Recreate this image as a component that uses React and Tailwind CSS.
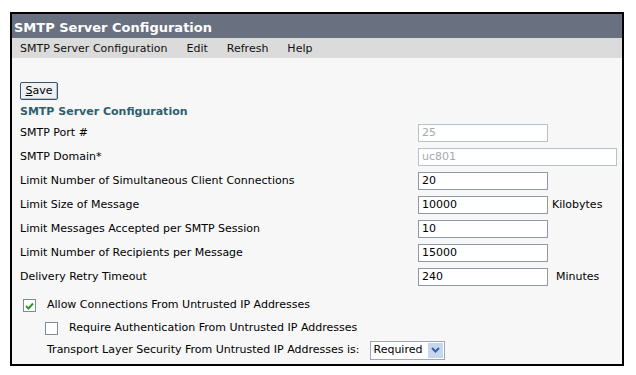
const font = { fontFamily: '"DejaVu Sans", Verdana, sans-serif' };

const rows = [
  { label: "SMTP Port #", value: "25", disabled: true },
  { label: "SMTP Domain*", value: "uc801", disabled: true, wide: true },
  { label: "Limit Number of Simultaneous Client Connections", value: "20" },
  { label: "Limit Size of Message", value: "10000", unit: "Kilobytes" },
  { label: "Limit Messages Accepted per SMTP Session", value: "10" },
  { label: "Limit Number of Recipients per Message", value: "15000" },
  { label: "Delivery Retry Timeout", value: "240", unit: "Minutes" },
];

const Field = ({ label, value, disabled, wide, unit }) => (
  <div className="flex h-6 items-center">
    <div className="w-[398px] shrink-0">{label}</div>
    <div
      className={`flex h-[18px] items-center border bg-white px-[3px] ${wide ? "w-[199px]" : "w-[130px]"} ${
        disabled ? "border-[#b9c1c8] text-[#a9a9a9]" : "border-[#8d9aa6]"
      }`}
    >
      {value}
    </div>
    {unit && <div className={unit === "Minutes" ? "ml-[8px]" : "ml-[4px]"}>{unit}</div>}
  </div>
);

export default function App() {
  return (
    <div className="h-[375px] w-[636px] bg-white pl-[10px] pt-[12px] text-[11px] text-black" style={font}>
      <div className="h-[354px] w-[614px] border-2 border-black bg-[#f7f7f7]">
        <div className="flex h-[24px] items-center bg-[#69707f] pl-[2px] pt-[3px] text-[13px] font-bold text-white">
          SMTP Server Configuration
        </div>
        <div className="flex h-[20px] items-center gap-[19px] bg-[#dbdbdb] pl-[8px] pt-[3px] text-[#111]">
          <span>SMTP Server Configuration</span>
          <span>Edit</span>
          <span>Refresh</span>
          <span>Help</span>
        </div>
        <div className="pl-[8px] pt-[24px]">
          <div className="flex h-[18px] w-[38px] items-center justify-center rounded-[2px] border border-[#38546a] bg-[#eef1f4] shadow-[inset_-1px_-1px_0_#b8c3cc]">
            <span className="underline">S</span>ave
          </div>
          <div className="mt-[4px] flex h-[17px] items-center font-bold text-[#2d5f6e]">SMTP Server Configuration</div>
          <div>
            {rows.map((r) => (
              <Field key={r.label} {...r} />
            ))}
          </div>
          <div className="mt-[5px] flex h-[23px] items-center pl-[3px]">
            <div className="flex h-[13px] w-[13px] items-center justify-center border border-[#7b8c9b] bg-white">
              <svg width="9" height="8" viewBox="0 0 9 8">
                <path d="M1 4 L3.5 6.5 L8 1.5" fill="none" stroke="#2e9a2a" strokeWidth="2" />
              </svg>
            </div>
            <span className="ml-[11px]">Allow Connections From Untrusted IP Addresses</span>
          </div>
          <div className="flex h-[22px] items-center pl-[25px]">
            <div className="h-[13px] w-[13px] border border-[#7b8c9b] bg-white" />
            <span className="ml-[11px]">Require Authentication From Untrusted IP Addresses</span>
          </div>
          <div className="flex h-[22px] items-center pl-[27px]">
            <span>Transport Layer Security From Untrusted IP Addresses is:</span>
            <div className="ml-[10px] flex h-[19px] w-[75px] items-center justify-between border border-[#9aa8b5] bg-white pl-[3px] pr-[1px]">
              <span>Required</span>
              <div className="flex h-[15px] w-[15px] items-center justify-center bg-[#c6d6ee]">
                <svg width="9" height="6" viewBox="0 0 9 6">
                  <path d="M1 1 L4.5 4.5 L8 1" fill="none" stroke="#3a5fa8" strokeWidth="2" />
                </svg>
              </div>
            </div>
          </div>
        </div>
      </div>
    </div>
  );
}
